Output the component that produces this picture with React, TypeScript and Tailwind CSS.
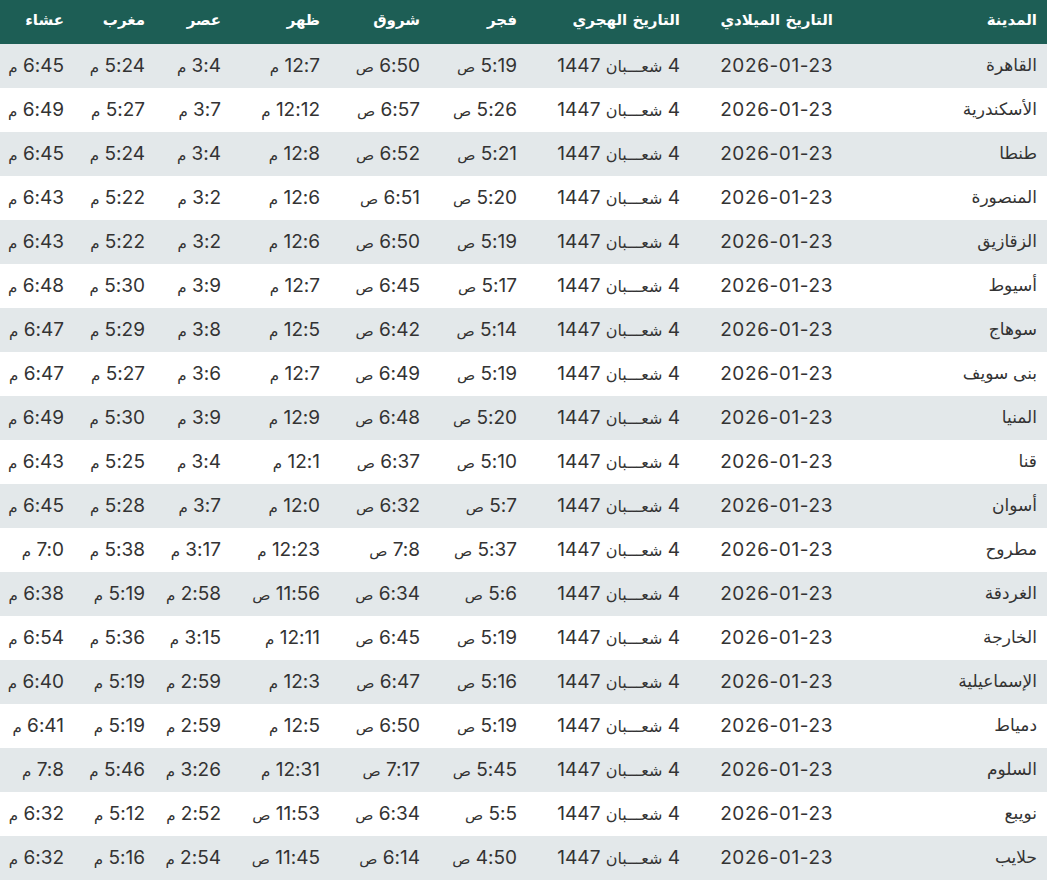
const HEADERS = [
  'المدينة',
  'التاريخ الميلادي',
  'التاريخ الهجري',
  'فجر',
  'شروق',
  'ظهر',
  'عصر',
  'مغرب',
  'عشاء',
];

// column widths, right to left
const WIDTHS = ['w-[204px]', 'w-[153px]', 'w-[163px]', 'w-[97px]', 'w-[100px]', 'w-[99px]', 'w-[76px]', 'w-[81px]', 'w-[74px]'];

const DATE = '2026-01-23';

// city, fajr, shuruq, dhuhr, asr, maghrib, isha
const ROWS: string[][] = [
  ['القاهرة', '5:19 ص', '6:50 ص', '12:7 م', '3:4 م', '5:24 م', '6:45 م'],
  ['الأسكندرية', '5:26 ص', '6:57 ص', '12:12 م', '3:7 م', '5:27 م', '6:49 م'],
  ['طنطا', '5:21 ص', '6:52 ص', '12:8 م', '3:4 م', '5:24 م', '6:45 م'],
  ['المنصورة', '5:20 ص', '6:51 ص', '12:6 م', '3:2 م', '5:22 م', '6:43 م'],
  ['الزقازيق', '5:19 ص', '6:50 ص', '12:6 م', '3:2 م', '5:22 م', '6:43 م'],
  ['أسيوط', '5:17 ص', '6:45 ص', '12:7 م', '3:9 م', '5:30 م', '6:48 م'],
  ['سوهاج', '5:14 ص', '6:42 ص', '12:5 م', '3:8 م', '5:29 م', '6:47 م'],
  ['بنى سويف', '5:19 ص', '6:49 ص', '12:7 م', '3:6 م', '5:27 م', '6:47 م'],
  ['المنيا', '5:20 ص', '6:48 ص', '12:9 م', '3:9 م', '5:30 م', '6:49 م'],
  ['قنا', '5:10 ص', '6:37 ص', '12:1 م', '3:4 م', '5:25 م', '6:43 م'],
  ['أسوان', '5:7 ص', '6:32 ص', '12:0 م', '3:7 م', '5:28 م', '6:45 م'],
  ['مطروح', '5:37 ص', '7:8 ص', '12:23 م', '3:17 م', '5:38 م', '7:0 م'],
  ['الغردقة', '5:6 ص', '6:34 ص', '11:56 ص', '2:58 م', '5:19 م', '6:38 م'],
  ['الخارجة', '5:19 ص', '6:45 ص', '12:11 م', '3:15 م', '5:36 م', '6:54 م'],
  ['الإسماعيلية', '5:16 ص', '6:47 ص', '12:3 م', '2:59 م', '5:19 م', '6:40 م'],
  ['دمياط', '5:19 ص', '6:50 ص', '12:5 م', '2:59 م', '5:19 م', '6:41 م'],
  ['السلوم', '5:45 ص', '7:17 ص', '12:31 م', '3:26 م', '5:46 م', '7:8 م'],
  ['نويبع', '5:5 ص', '6:34 ص', '11:53 ص', '2:52 م', '5:12 م', '6:32 م'],
  ['حلايب', '4:50 ص', '6:14 ص', '11:45 ص', '2:54 م', '5:16 م', '6:32 م'],
];

function Time({ value }: { value: string }) {
  const [num, suffix] = value.split(' ');
  return (
    <>
      <span className="tracking-[0.3px]">{num}</span>{' '}
      <span className="text-[15px]">{suffix}</span>
    </>
  );
}

export default function App() {
  return (
    <div dir="rtl" className="w-[1047px] bg-white font-['Inter','DejaVu_Sans',sans-serif]">
      <table className="w-full table-fixed border-collapse">
        <thead>
          <tr className="h-[44px] bg-[#1d5e55]">
            {HEADERS.map((h, i) => (
              <th
                key={h}
                className={`${WIDTHS[i]} px-[10px] pb-[3px] text-right align-middle font-['DejaVu_Sans',sans-serif] text-[15px] font-bold text-white`}
              >
                {h}
              </th>
            ))}
          </tr>
        </thead>
        <tbody>
          {ROWS.map((row, r) => {
            const [city, ...times] = row;
            return (
              <tr key={city} className={`h-[44px] ${r % 2 === 0 ? 'bg-[#e3e8ea]' : 'bg-white'}`}>
                <td className="px-[10px] text-right text-[17px] text-[#333]">{city}</td>
                <td className="px-[10px] text-right text-[19px] tracking-[0.6px] text-[#333]">{DATE}</td>
                <td className="whitespace-nowrap px-[10px] text-right text-[19px] text-[#333]">
                  <span className="tracking-[0.3px]">4</span>{' '}
                  <span className="text-[16px]">شعـــبان</span>{' '}
                  <span className="tracking-[0.3px]">1447</span>
                </td>
                {times.map((t, c) => (
                  <td key={c} className="whitespace-nowrap px-[10px] text-right text-[19px] text-[#333]">
                    <Time value={t} />
                  </td>
                ))}
              </tr>
            );
          })}
        </tbody>
      </table>
    </div>
  );
}
